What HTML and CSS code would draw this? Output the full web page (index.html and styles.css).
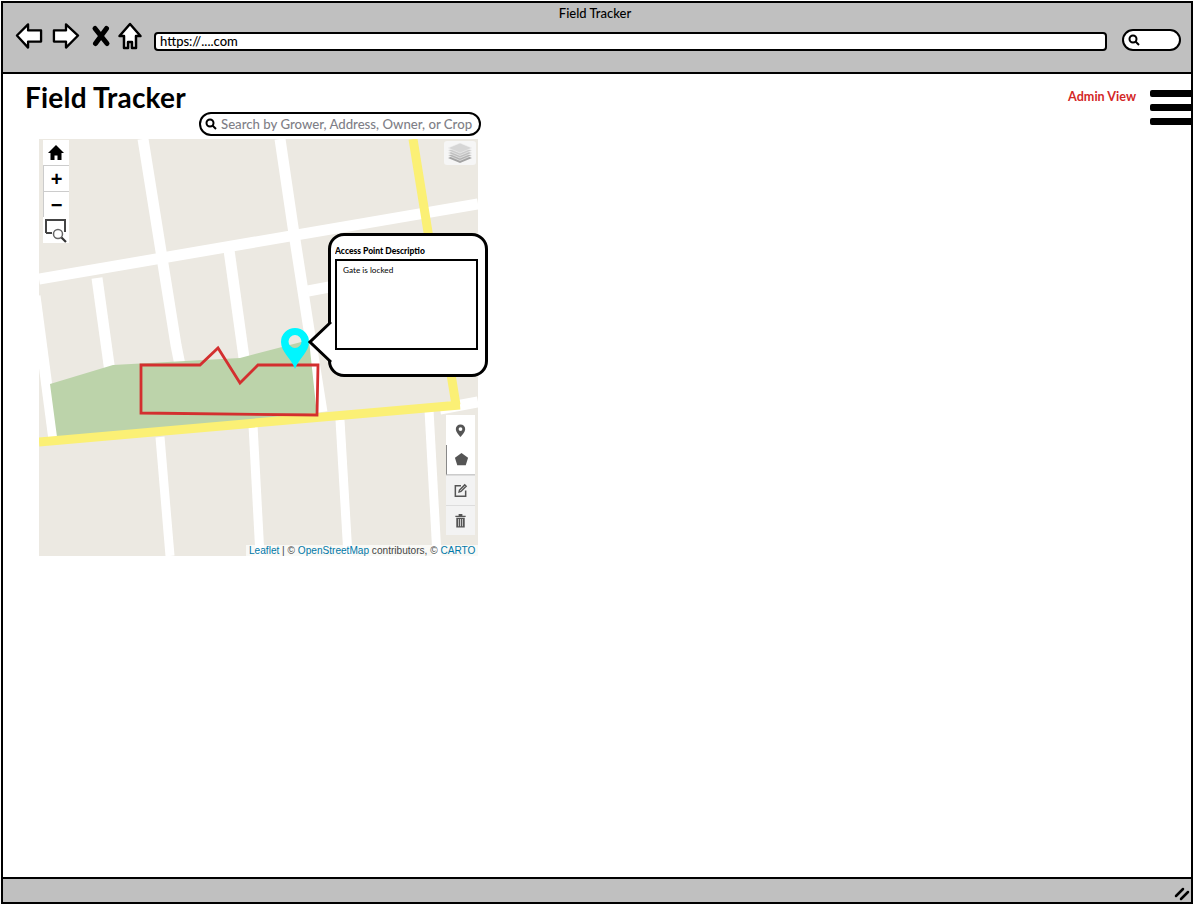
FILE: index.html
```html
<!DOCTYPE html>
<html lang="en">
<head>
<meta charset="utf-8">
<title>Field Tracker</title>
<link rel="stylesheet" href="styles.css">
</head>
<body>
<div class="window">
  <header class="chrome">
    <div class="chrome-title">Field Tracker</div>
    <div class="nav-row">
      <svg class="nav-icon back" viewBox="0 0 30 28"><path d="M2 13.500L14 1.500V8H28V20H14V26.500Z"/></svg>
      <svg class="nav-icon forward" viewBox="0 0 30 28"><path d="M28 13.500L15 1.500V8H2V20H15V26.500Z"/></svg>
      <svg class="nav-icon close" viewBox="0 0 18 20"><path d="M3 2.500L15 17.500M14.500 2.500L3.500 17.500"/></svg>
      <svg class="nav-icon home" viewBox="0 0 24 28"><path d="M1.500 14L12 2L22.500 14H18V26H14V20H10V26H6V14Z"/></svg>
      <div class="url-bar">https://....com</div>
      <div class="chrome-search">
        <svg class="search-glyph" viewBox="0 0 12 12"><circle cx="5" cy="5" r="3.500"/><path d="M7.500 7.500L11 11"/></svg>
      </div>
    </div>
  </header>

  <main class="page">
    <div class="page-head">
      <h1 class="page-title">Field Tracker</h1>
      <a class="admin-link">Admin View</a>
      <div class="hamburger"><span></span><span></span><span></span></div>
    </div>
    <div class="field-search">
      <svg class="search-glyph" viewBox="0 0 12 12"><circle cx="5" cy="5" r="3.500"/><path d="M7.500 7.500L11 11"/></svg>
      <span>Search by Grower, Address, Owner, or Crop</span>
    </div>

    <section class="map">
      <svg class="map-canvas" viewBox="39 139 439 417">
        <rect x="39" y="139" width="439" height="417" fill="#ece9e2"/>
        <g class="roads">
          <path d="M35 296L54 440"/>
          <path d="M97 278L110 372"/>
          <path d="M143 139L176 345L180 365"/>
          <path d="M229 250L245 365"/>
          <path d="M280 139L293 227L309 330L322 412"/>
          <path d="M39 279L478 204"/>
          <path d="M308 291L340 285"/>
          <path d="M440 409L478 402"/>
          <path class="thin" d="M160 437L170 556"/>
          <path class="thin" d="M253 425L260 556"/>
          <path class="thin" d="M340 420L348 556"/>
          <path class="thin" d="M429 410L437 556"/>
        </g>
        <path class="park" d="M50 384L113 365L240 358L309 340L317 415L57 437Z"/>
        <g class="highway">
          <path d="M413 139L428 232L456 405"/>
          <path d="M39 442L460 405"/>
        </g>
        <path class="field" d="M141 365H200L218 348L240 383L258 365H318L317 415L141 413Z"/>
        <path class="pin" fill-rule="evenodd" d="M295 369C291 358 281 352 281 342A14 14 0 0 1 309 342C309 352 299 358 295 369ZM295 335A6.500 6.500 0 1 0 295 348A6.500 6.500 0 1 0 295 335Z"/>
      </svg>

      <div class="ctl-stack">
        <button class="ctl ctl-home"><svg viewBox="0 0 18 18"><path d="M9 1L17 9H14.500V16H10.500V11.500H7.500V16H3.500V9H1Z"/></svg></button>
        <button class="ctl ctl-zoom">+</button>
        <button class="ctl ctl-zoom">−</button>
        <button class="ctl ctl-box"><svg viewBox="0 0 24 26"><path class="box" d="M2 16V3H21V15"/><path class="box" d="M2 16H8"/><circle class="lens" cx="14" cy="17" r="4.500"/><path class="handle" d="M17.500 20.500L22 25"/></svg></button>
      </div>

      <button class="layers">
        <svg viewBox="0 0 26 20"><path d="M13 10L25 15L13 20L1 15Z" fill="#a3a3a3"/><path d="M13 7.500L25 12.500L13 17.500L1 12.500Z" fill="#b4b4b4" stroke="#f2f2f2" stroke-width=".6"/><path d="M13 5L25 10L13 15L1 10Z" fill="#c0c0c0" stroke="#f2f2f2" stroke-width=".6"/><path d="M13 2.500L25 7.500L13 12.500L1 7.500Z" fill="#cbcbcb" stroke="#f2f2f2" stroke-width=".6"/><path d="M13 0L25 5L13 10L1 5Z" fill="#d6d6d6" stroke="#f2f2f2" stroke-width=".6"/></svg>
      </button>

      <div class="draw-bar">
        <button class="draw"><svg viewBox="0 0 16 16"><path fill-rule="evenodd" d="M8 1.500A5 5 0 0 0 3 6.500C3 10 8 15 8 15S13 10 13 6.500A5 5 0 0 0 8 1.500ZM8 4.500A2 2 0 1 1 8 8.500A2 2 0 1 1 8 4.500Z"/></svg></button>
        <button class="draw active"><svg viewBox="0 0 16 16"><path d="M8 1L15 6L12.500 14H3.500L1 6Z"/></svg></button>
        <button class="draw muted"><svg viewBox="0 0 16 16"><path class="outline" d="M8.500 3H2.500V14H13.500V8"/><path class="outline" d="M6.500 9.500L7 7.500L12.500 2L14 3.500L8.500 9Z"/></svg></button>
        <button class="draw muted"><svg viewBox="0 0 16 16"><path d="M2.500 3H13.500V4.200H2.500ZM6 1H10V3H6Z"/><path fill-rule="evenodd" d="M3.500 5H12.500V15.500H3.500ZM5.500 6.500V14H6.200V6.500ZM7.600 6.500V14H8.400V6.500ZM9.800 6.500V14H10.500V6.500Z"/></svg></button>
      </div>

      <div class="attribution"><a>Leaflet</a> | © <a>OpenStreetMap</a> contributors, © <a>CARTO</a></div>

      <div class="balloon">
        <svg class="balloon-tail" viewBox="0 0 24 44"><path d="M23 2L2 22L23 42"/></svg>
        <div class="balloon-title">Access Point Descriptio</div>
        <div class="balloon-box">Gate is locked</div>
      </div>
    </section>
  </main>

  <footer class="status">
    <svg class="grip" viewBox="0 0 16 14"><path d="M2 9L9 2M7 12L14 5"/></svg>
  </footer>
</div>
</body>
</html>
```

FILE: styles.css
```css
* { box-sizing: border-box; }

html, body { margin: 0; height: 100%; background: #fff; }

body {
  padding: 1px 2px 1px 1px;
  font-family: "Lato", "Liberation Sans", sans-serif;
  color: #000;
  overflow: hidden;
}

.window {
  height: 903px;
  border: 2px solid #000;
  display: flex;
  flex-direction: column;
  background: #fff;
}

/* browser chrome */
.chrome {
  height: 71px;
  flex: none;
  background: #c0c0c0;
  border-bottom: 2px solid #000;
  padding: 3px 10px 0 12px;
}

.chrome-title {
  height: 15px;
  text-align: center;
  font-size: 13px;
  line-height: 15px;
  font-weight: 500;
  padding-right: 6px;
}

.nav-row {
  height: 30px;
  display: flex;
  align-items: center;
}

.nav-icon { flex: none; display: block; overflow: visible; }
.nav-icon path { fill: #fff; stroke: #000; stroke-width: 2.500; stroke-linejoin: round; }

.back { width: 28px; height: 26px; }
.forward { width: 28px; height: 26px; margin-left: 9px; }
.close { width: 18px; height: 20px; margin-left: 12px; }
.close path { fill: none; stroke-width: 5; stroke-linecap: round; }
.home { width: 24px; height: 28px; margin-left: 8px; }

.url-bar {
  flex: 1;
  height: 19px;
  align-self: flex-end;
  margin-left: 12px;
  background: #fff;
  border: 2px solid #000;
  border-radius: 4px;
  padding-left: 4px;
  font-size: 13px;
  line-height: 15px;
  font-weight: 500;
}

.chrome-search {
  width: 59px;
  height: 22px;
  align-self: flex-end;
  margin-left: 15px;
  background: #fff;
  border: 2px solid #000;
  border-radius: 11px;
  padding: 3px 0 0 4px;
}

.search-glyph { display: block; width: 12px; height: 12px; flex: none; }
.search-glyph circle, .search-glyph path { fill: none; stroke: #000; stroke-width: 2; }

/* page */
.page {
  flex: 1;
  min-height: 0;
}

.page-head {
  height: 38px;
  display: flex;
  align-items: flex-start;
  padding-left: 22px;
}

.page-title {
  flex: 1;
  margin: 6px 0 0;
  font-size: 28px;
  line-height: 34px;
  font-weight: 700;
  letter-spacing: .2px;
}

.admin-link {
  margin: 15px 14px 0 0;
  color: #d32727;
  font-size: 12.600px;
  line-height: 16px;
  font-weight: 700;
}

.hamburger {
  width: 41px;
  margin-top: 16px;
  display: flex;
  flex-direction: column;
  gap: 7px;
}

.hamburger span {
  height: 7px;
  background: #000;
  border-radius: 2px 0 0 2px;
}

.field-search {
  width: 282px;
  height: 24px;
  margin-left: 196px;
  display: flex;
  align-items: center;
  gap: 4px;
  padding-left: 4px;
  border: 2px solid #000;
  border-radius: 12px;
  color: #7f7f87;
  font-size: 13.200px;
  font-weight: 500;
  white-space: nowrap;
}

.map {
  position: relative;
  width: 439px;
  height: 417px;
  margin: 3px 0 0 36px;
}

.map-canvas {
  position: absolute;
  inset: 0;
  width: 100%;
  height: 100%;
  display: block;
}

.roads path { fill: none; stroke: #fff; stroke-width: 11; }
.roads path.thin { stroke-width: 9; }
.park { fill: #bcd3aa; }
.highway path { fill: none; stroke: #fbf075; stroke-width: 9; stroke-linejoin: round; }
.field { fill: none; stroke: #d32f2f; stroke-width: 2.800; }
.pin { fill: #00f6ff; }

/* leaflet controls */
.ctl-stack {
  position: absolute;
  left: 4px;
  top: 1px;
  width: 26px;
  display: flex;
  flex-direction: column;
}

.ctl {
  width: 26px;
  height: 26px;
  padding: 0;
  border: 0;
  background: #fff;
  display: flex;
  align-items: center;
  justify-content: center;
  font-family: "Liberation Sans", sans-serif;
}

.ctl-home svg { width: 18px; height: 18px; }
.ctl-home { height: 25px; }
.ctl-zoom {
  font-size: 20px;
  line-height: 1;
  font-weight: 700;
  border-left: 1px solid #ccc;
  border-top: 1px solid #ccc;
}

.ctl-box { height: 26px; }
.ctl-box svg { width: 24px; height: 26px; overflow: visible; }
.box { fill: none; stroke: #444; stroke-width: 2; }
.lens { fill: #fff; stroke: #666; stroke-width: 1.500; }
.handle { fill: none; stroke: #333; stroke-width: 2.200; }

.layers {
  position: absolute;
  left: 405px;
  top: 2px;
  width: 32px;
  height: 24px;
  padding: 0;
  border: 0;
  border-radius: 3px;
  background: #f6f6f6;
  display: flex;
  align-items: center;
  justify-content: center;
}

.layers svg { width: 26px; height: 20px; }

.draw-bar {
  position: absolute;
  left: 407px;
  top: 276px;
  width: 29px;
  display: flex;
  flex-direction: column;
}

.draw {
  width: 29px;
  height: 30px;
  padding: 0;
  border: 0;
  background: #fff;
  display: flex;
  align-items: center;
  justify-content: center;
}

.draw.active { border-left: 1px solid #888; border-bottom: 1px solid #ccc; }
.draw.muted { background: #f3f3f3; border-top: 1px solid #ddd; }
.draw svg { width: 15px; height: 15px; }
.draw svg path { fill: #555; }
.draw svg path.outline { fill: none; stroke: #555; stroke-width: 1.600; }

.attribution {
  position: absolute;
  right: 0;
  bottom: 0;
  width: 232px;
  height: 11px;
  background: rgba(255, 255, 255, .7);
  padding-left: 3px;
  font-family: "Liberation Sans", sans-serif;
  font-size: 10.100px;
  line-height: 11px;
  color: #444;
  white-space: nowrap;
  overflow: hidden;
}

.attribution a { color: #0078a8; }

/* speech balloon */
.balloon {
  position: absolute;
  left: 289px;
  top: 94px;
  width: 160px;
  height: 144px;
  background: #fff;
  border: 3px solid #000;
  border-radius: 16px;
  padding: 10px 0 0 4px;
}

.balloon-tail {
  position: absolute;
  left: -23px;
  top: 84px;
  width: 24px;
  height: 44px;
}

.balloon-tail path { fill: #fff; stroke: #000; stroke-width: 3; }

.balloon-title {
  font-size: 8.500px;
  line-height: 10px;
  font-weight: 900;
  white-space: nowrap;
  overflow: hidden;
  width: 92px;
}

.balloon-box {
  width: 143px;
  height: 91px;
  margin: 3px 0 0 0;
  border: 2px solid #000;
  padding: 4px 0 0 6px;
  font-size: 8.200px;
  line-height: 10px;
}

/* status bar */
.status {
  height: 25px;
  flex: none;
  background: #c0c0c0;
  border-top: 2px solid #000;
  display: flex;
  justify-content: flex-end;
  align-items: flex-end;
  padding: 0 1px 1px 0;
}

.grip { width: 16px; height: 14px; }
.grip path { fill: none; stroke: #000; stroke-width: 2.500; stroke-linecap: round; }
```
